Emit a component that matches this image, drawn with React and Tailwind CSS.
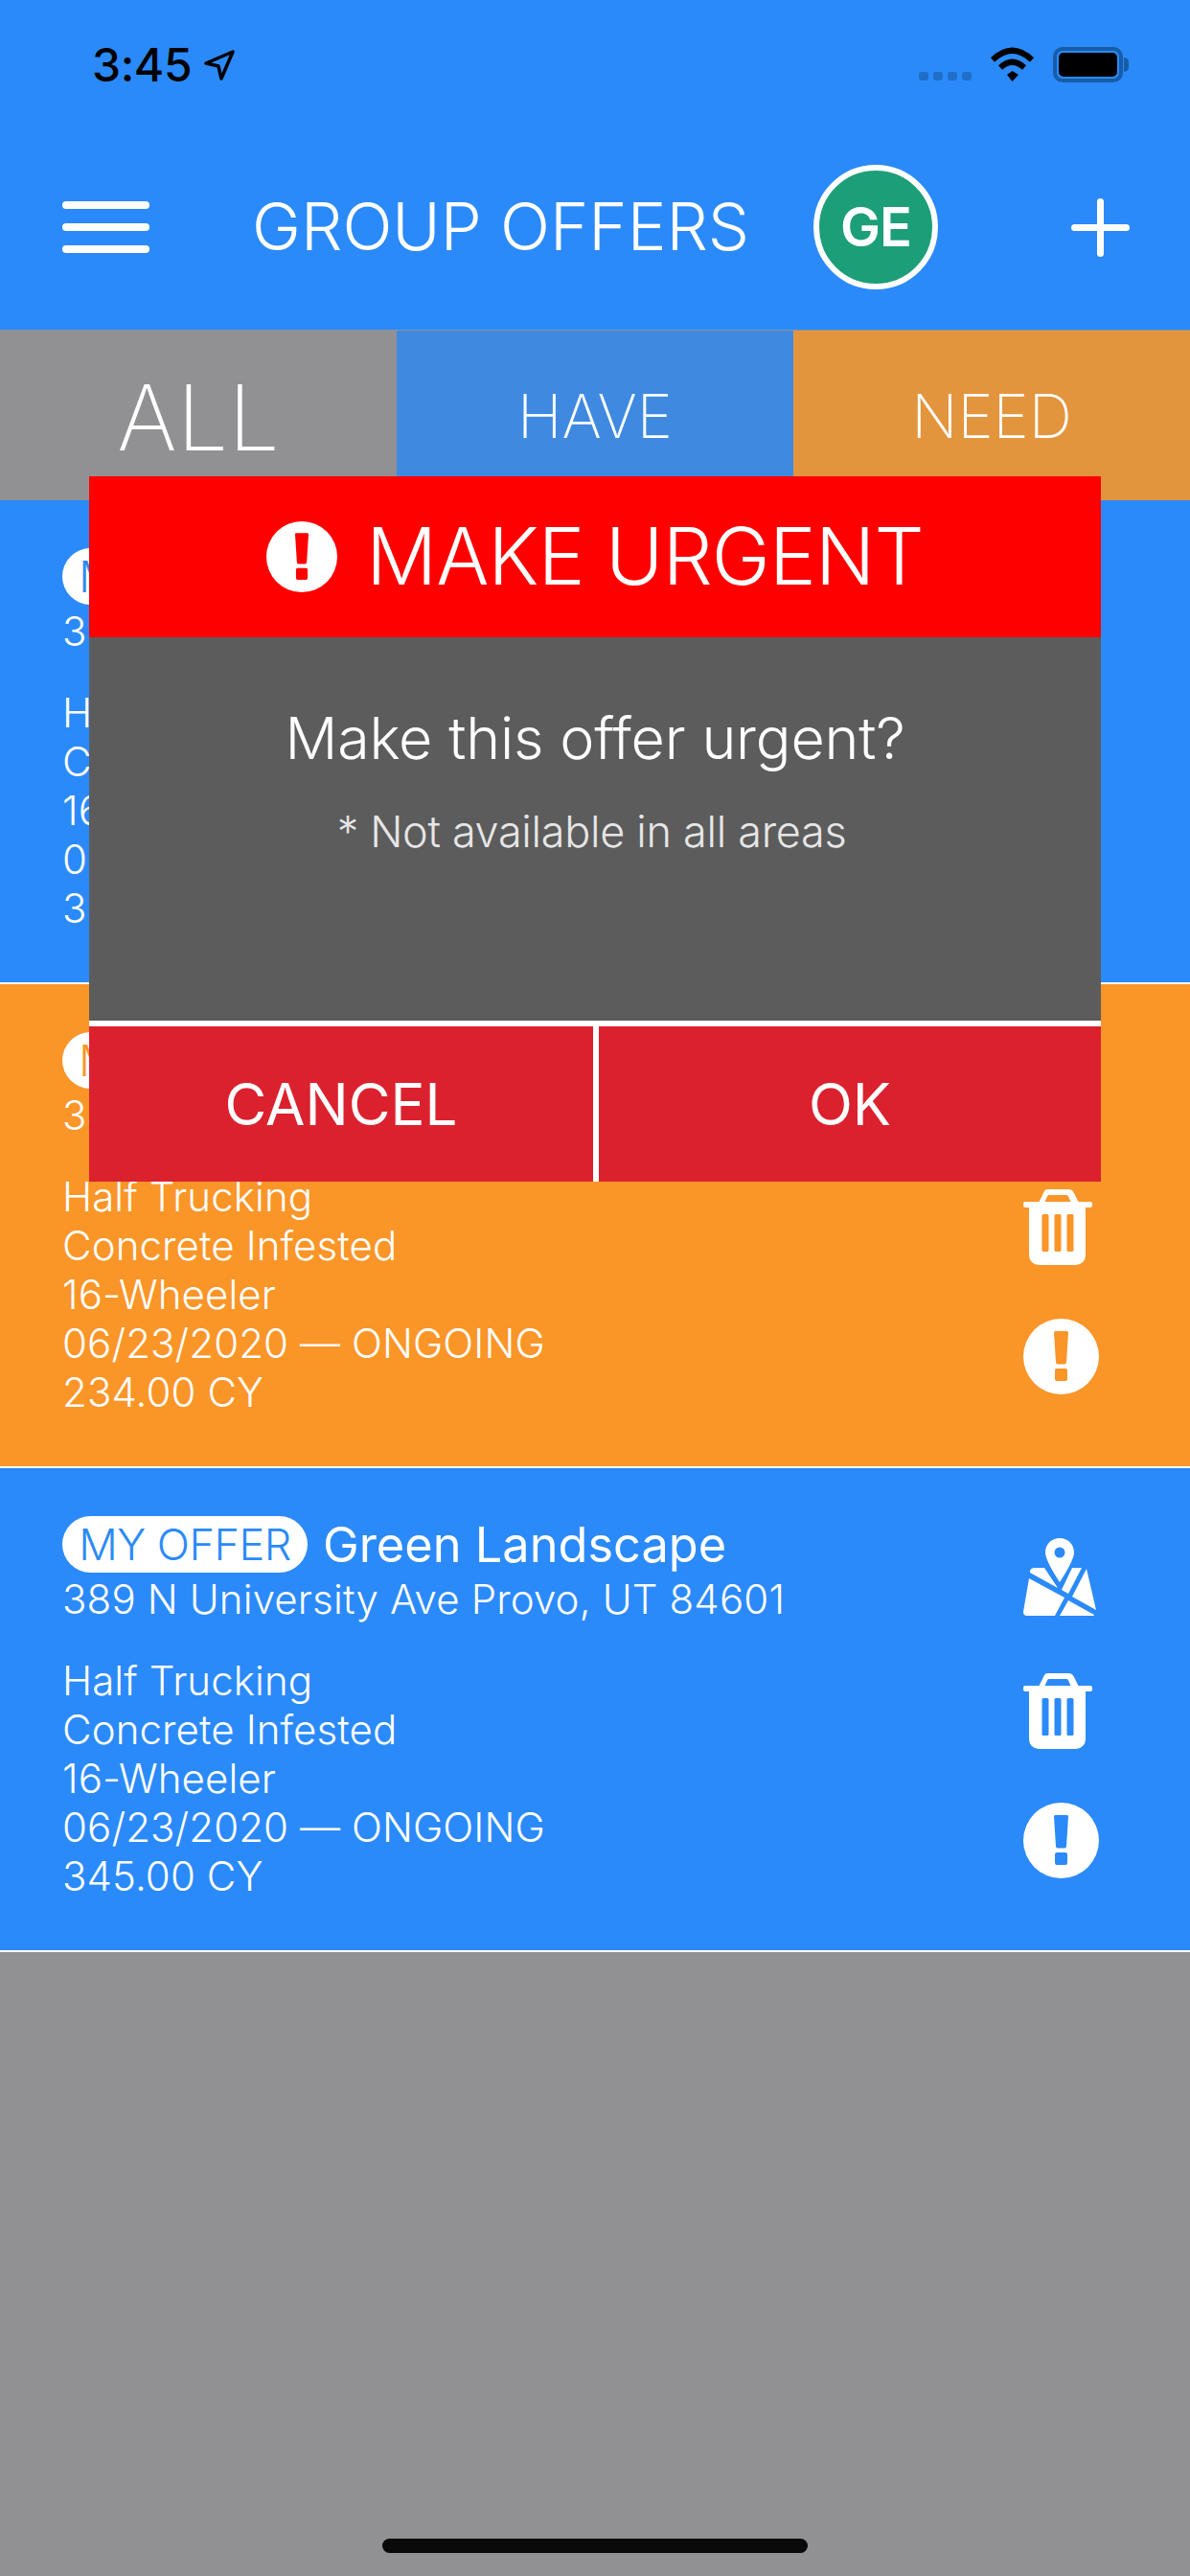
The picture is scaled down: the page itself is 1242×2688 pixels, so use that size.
function Exclaim({ className }) {
  return (
    <svg viewBox="0 0 79 79" className={className} fill="currentColor">
      <path fillRule="evenodd" d="M39.5 0a39.5 39.5 0 1 1 0 79a39.5 39.5 0 1 1 0-79ZM33.5 13a1.5 1.5 0 0 0-1.5 1.5l2 31a2 2 0 0 0 2 2h7a2 2 0 0 0 2-2l2-31a1.5 1.5 0 0 0-1.5-1.5ZM35 52a2 2 0 0 0-2 2v9a2 2 0 0 0 2 2h9a2 2 0 0 0 2-2v-9a2 2 0 0 0-2-2Z" />
    </svg>
  );
}

function Trash({ className }) {
  return (
    <svg viewBox="0 0 72 79" className={className} fill="currentColor">
      <path fillRule="evenodd" d="M25 0h22c3 0 4.500 1 6 4l4.500 9H70a2 2 0 0 1 2 2v2a2 2 0 0 1-2 2h-5v50a10 10 0 0 1-10 10H16a10 10 0 0 1-10-10V19H2a2 2 0 0 1-2-2v-2a2 2 0 0 1 2-2h14.500L21 4c1.500-3 2-4 4-4ZM27 6c-1 0-1.500.5-2 1.500L22.500 13h27L47 7.500c-.5-1-1-1.500-2-1.500ZM21 26a1.500 1.500 0 0 0-1.500 1.500v36A1.500 1.500 0 0 0 21 65h4a1.500 1.500 0 0 0 1.500-1.500v-36A1.500 1.500 0 0 0 25 26ZM34 26a1.500 1.500 0 0 0-1.500 1.500v36A1.500 1.500 0 0 0 34 65h4a1.500 1.500 0 0 0 1.500-1.500v-36A1.500 1.500 0 0 0 38 26ZM47 26a1.500 1.500 0 0 0-1.500 1.500v36A1.500 1.500 0 0 0 47 65h4a1.500 1.500 0 0 0 1.500-1.500v-36A1.500 1.500 0 0 0 51 26Z" />
    </svg>
  );
}

function MapPin({ className }) {
  return (
    <svg viewBox="0 0 76 82" className={className} fill="currentColor">
      <path fillRule="evenodd" d="M38 0c8.500 0 15 6.500 15 15c0 7-9 22-15 31c-6-9-15-24-15-31c0-8.500 6.500-15 15-15ZM38 9.500a5.500 5.500 0 1 0 0 11a5.500 5.500 0 1 0 0-11Z" />
      <path d="M7 34q1-3 5-3h10l14 21L7 36Z" />
      <path d="M51 31h10L47 58l-7-4Z" />
      <path d="M66 32l10 43l-25-14Z" />
      <path d="M6 42l37 20l-10 19H4q-4 0-4-4Z" />
      <path d="M47 65l27 15q0 1-1 1H38Z" />
    </svg>
  );
}

function Card({ bg, text, name, address, qty }) {
  return (
    <div className={`h-[505px] shrink-0 ${bg} border-b-2 border-white pl-[65px] pr-[93px] pt-[50px] flex justify-between`}>
      <div className="flex flex-col text-white">
        <div className="flex items-center h-[59px]">
          <span className={`h-[59px] w-[256px] rounded-full bg-white ${text} text-[45px] leading-[59px] text-center tracking-[-0.5px] font-light whitespace-nowrap`}>MY OFFER</span>
          <span className="ml-[16px] text-[50.500px] leading-[59px] font-normal whitespace-nowrap">{name}</span>
        </div>
        <div className="text-[42px] leading-[54px] mt-[1px] font-light tracking-[0.15px] whitespace-nowrap">{address}</div>
        <div className="mt-[32px] text-[42px] leading-[51px] font-light tracking-[0.1px] whitespace-nowrap">
          <div>Half Trucking</div>
          <div>Concrete Infested</div>
          <div>16-Wheeler</div>
          <div>06/23/2020 — ONGOING</div>
          <div>{qty}</div>
        </div>
      </div>
      <div className="flex flex-col items-start text-white w-[81px] pt-[23px]">
        <MapPin className="w-[76px] h-[82px]" />
        <Trash className="w-[72px] h-[79px] mt-[59px]" />
        <Exclaim className="w-[79px] h-[79px] mt-[56px]" />
      </div>
    </div>
  );
}

export default function App() {
  return (
    <div className="relative w-[1242px] h-[2688px] overflow-hidden bg-[#919193] flex flex-col font-['Inter',sans-serif]">
      <div className="h-[344px] shrink-0 bg-[#2b8af9] flex flex-col">
        <div className="h-[172px] shrink-0 flex items-start pl-[96px] pr-[70px] pt-[40px]">
          <span className="text-[48px] leading-[56px] font-medium text-black tracking-[-0.4px]">3:45</span>
          <svg viewBox="0 0 32 32" className="w-[32px] h-[32px] ml-[13px] mt-[12px]" fill="none" stroke="#000" strokeWidth="3.500" strokeLinejoin="round">
            <path d="M2 14L30 2L18 30L15 17Z" />
          </svg>
          <div className="ml-auto flex items-start">
            <div className="flex gap-[5px] mt-[35px]">
              <span className="w-[10px] h-[9px] rounded-[3px] bg-[#1f6fc9]" />
              <span className="w-[10px] h-[9px] rounded-[3px] bg-[#1f6fc9]" />
              <span className="w-[10px] h-[9px] rounded-[3px] bg-[#1f6fc9]" />
              <span className="w-[10px] h-[9px] rounded-[3px] bg-[#1f6fc9]" />
            </div>
            <svg viewBox="0 0 47 36" className="w-[47px] h-[36px] ml-[19px] mt-[9px]" fill="none" stroke="#000" strokeWidth="6">
              <path d="M3 13.500Q23.500-6 44 13.500" />
              <path d="M11 21.500Q23.500 10 36 21.500" />
              <path d="M18 29L23.500 25L30 29L23.500 36Z" fill="#000" stroke="none" />
            </svg>
            <div className="ml-[19px] mt-[9px] relative w-[73px] h-[37px] rounded-[10px] border-[4px] border-[#165ca8] p-[2px]">
              <div className="w-full h-full rounded-[5px] bg-black" />
              <div className="absolute left-[70px] top-[7px] w-[5px] h-[15px] rounded-r-full bg-[#165ca8]" />
            </div>
          </div>
        </div>
        <div className="flex items-center pl-[65px] h-[130px]">
          <div className="w-[91px] flex flex-col gap-[15px]">
            <span className="h-[8px] rounded-full bg-white" />
            <span className="h-[8px] rounded-full bg-white" />
            <span className="h-[8px] rounded-full bg-white" />
          </div>
          <span className="ml-[107px] w-[517px] text-[68.500px] leading-[70px] font-[350] text-white whitespace-nowrap">GROUP OFFERS</span>
          <div className="ml-[69px] w-[130px] h-[130px] rounded-full border-[6px] border-white bg-[#1c9e78] flex items-center justify-center text-white text-[56px] font-semibold tracking-[-1px]">GE</div>
          <div className="ml-[139px] relative w-[61px] h-[61px]">
            <span className="absolute left-0 top-[27px] w-[61px] h-[7px] rounded-full bg-white" />
            <span className="absolute left-[27px] top-0 w-[7px] h-[61px] rounded-full bg-white" />
          </div>
        </div>
      </div>
      <div className="h-[178px] shrink-0 border-t border-[#919193] flex text-white">
        <div className="flex-1 bg-[#919193] flex justify-center pt-[36px] text-[95px] leading-[110px] font-extralight">ALL</div>
        <div className="flex-1 bg-[#3f8ae0] flex justify-center pt-[44px] text-[63px] leading-[90px] font-extralight">HAVE</div>
        <div className="flex-1 bg-[#e3953e] flex justify-center pt-[44px] text-[63px] leading-[90px] font-extralight">NEED</div>
      </div>
      <Card bg="bg-[#2b8af9]" text="text-[#2b8af9]" name="Green Landscape" address="389 N University Ave Provo, UT 84601" qty="345.00 CY" />
      <Card bg="bg-[#fa9528]" text="text-[#fa9528]" name="Green Landscape" address="389 N University Ave Provo, UT 84601" qty="234.00 CY" />
      <Card bg="bg-[#2b8af9]" text="text-[#2b8af9]" name="Green Landscape" address="389 N University Ave Provo, UT 84601" qty="345.00 CY" />

      <div className="absolute left-[93px] top-[497px] w-[1056px] h-[736px] flex flex-col text-white">
        <div className="h-[168px] shrink-0 bg-[#ff0000] flex items-center justify-center">
          <Exclaim className="w-[74px] h-[74px]" />
          <span className="ml-[30px] text-[82px] leading-[100px] font-[350] tracking-[-0.8px] whitespace-nowrap">MAKE URGENT</span>
        </div>
        <div className="h-[400px] shrink-0 bg-[#5c5c5c] flex flex-col items-center pt-[69px]">
          <div className="text-[61px] leading-[72px] font-[350] tracking-[-0.2px]">Make this offer urgent?</div>
          <div className="mt-[34px] mr-[7px] text-[45px] leading-[56px] font-light tracking-[-0.3px] text-[#e6e6e6]">* Not available in all areas</div>
        </div>
        <div className="h-[168px] shrink-0 flex border-t-[6px] border-white bg-[#dc212e]">
          <div className="w-[526px] flex items-center justify-center text-[60px] font-normal">CANCEL</div>
          <div className="w-[6px] bg-white" />
          <div className="flex-1 flex items-center justify-center text-[60px] font-normal">OK</div>
        </div>
      </div>

      <div className="absolute left-[399px] top-[2649px] w-[444px] h-[15px] rounded-full bg-[#0a0a0a]" />
    </div>
  );
}
